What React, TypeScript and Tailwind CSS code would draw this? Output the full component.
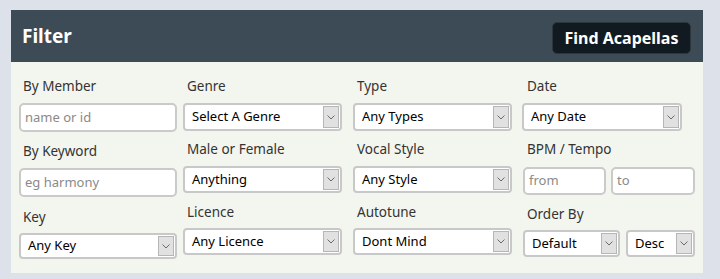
import React from 'react';

const font = { fontFamily: '"Noto Sans", "Open Sans", sans-serif' };

function Label({ children, indent = 'pl-[4px]', className = '' }: { children: React.ReactNode; indent?: string; className?: string }) {
  return (
    <div className={`h-[20px] text-[13.5px] leading-[20px] text-[#333] whitespace-nowrap ${indent} ${className}`}>
      {children}
    </div>
  );
}

function TextBox({ placeholder, className = '' }: { placeholder: string; className?: string }) {
  return (
    <div
      className={`flex items-center border-2 border-[#cacaca] rounded-[5px] bg-white pl-[4px] text-[13px] text-[#8a8a8a] ${className}`}
    >
      {placeholder}
    </div>
  );
}

function Select({ value, className = '' }: { value: string; className?: string }) {
  return (
    <div className={`flex items-stretch border-2 border-[#c8c8c8] rounded-[4px] bg-white ${className}`}>
      <div className="flex-1 flex items-center pl-[7px] text-[13px] text-black whitespace-nowrap overflow-hidden">
        {value}
      </div>
      <div className="w-[16px] my-[1px] mr-[1px] flex items-center justify-center bg-[#e1e1e1] border border-[#b6b6b6]">
        <svg width="8" height="5" viewBox="0 0 8 5">
          <polyline points="0.5,0.5 4,4 7.5,0.5" fill="none" stroke="#6a6a6a" strokeWidth="1" />
        </svg>
      </div>
    </div>
  );
}

export default function App() {
  return (
    <div className="min-h-[279px] bg-[#dde1ea] pt-[10px] pl-[11px]" style={font}>
      <div className="w-[692px]">
        <div className="h-[52px] bg-[#3d4b56] flex items-start justify-between pl-[11px] pr-[12px]">
          <h2 className="mt-[14px] text-[19px] leading-[24px] font-bold text-white">Filter</h2>
          <button className="mt-[12px] w-[139px] h-[32px] bg-[#111a20] border border-[#2c363d] rounded-[5px] text-white text-[16px] font-bold leading-[30px]">
            Find Acapellas
          </button>
        </div>

        <div className="h-[211px] bg-[#f3f6ee] pt-[14px] pl-[8px] flex">
          <div className="w-[164px] flex flex-col">
            <Label>By Member</Label>
            <TextBox placeholder="name or id" className="mt-[7px] h-[29px] w-[158px]" />
            <Label className="mt-[9px]">By Keyword</Label>
            <TextBox placeholder="eg harmony" className="mt-[7px] h-[29px] w-[158px]" />
            <Label className="mt-[10px]">Key</Label>
            <Select value="Any Key" className="mt-[6px] h-[26px] w-[158px]" />
          </div>

          <div className="w-[170px] flex flex-col">
            <Label>Genre</Label>
            <Select value="Select A Genre" className="mt-[7px] h-[28px] w-[159px]" />
            <Label className="mt-[8px]">Male or Female</Label>
            <Select value="Anything" className="mt-[7px] h-[27px] w-[159px]" />
            <Label className="mt-[9px]">Licence</Label>
            <Select value="Any Licence" className="mt-[6px] h-[27px] w-[159px]" />
          </div>

          <div className="w-[169px] flex flex-col">
            <Label>Type</Label>
            <Select value="Any Types" className="mt-[7px] h-[28px] w-[159px]" />
            <Label className="mt-[8px]">Vocal Style</Label>
            <Select value="Any Style" className="mt-[7px] h-[27px] w-[159px]" />
            <Label className="mt-[9px]">Autotune</Label>
            <Select value="Dont Mind" className="mt-[6px] h-[27px] w-[159px]" />
          </div>

          <div className="w-[174px] flex flex-col">
            <Label indent="pl-[5px]">Date</Label>
            <Select value="Any Date" className="mt-[7px] h-[28px] w-[160px]" />
            <Label indent="pl-[5px]" className="mt-[8px]">BPM / Tempo</Label>
            <div className="mt-[8px] flex gap-[5px] pl-[1px]">
              <TextBox placeholder="from" className="h-[28px] w-[83px]" />
              <TextBox placeholder="to" className="h-[28px] w-[84px]" />
            </div>
            <Label indent="pl-[5px]" className="mt-[9px]">Order By</Label>
            <div className="mt-[6px] flex gap-[6px] pl-[1px]">
              <Select value="Default" className="h-[27px] w-[97px]" />
              <Select value="Desc" className="h-[27px] w-[69px]" />
            </div>
          </div>
        </div>
      </div>
    </div>
  );
}
